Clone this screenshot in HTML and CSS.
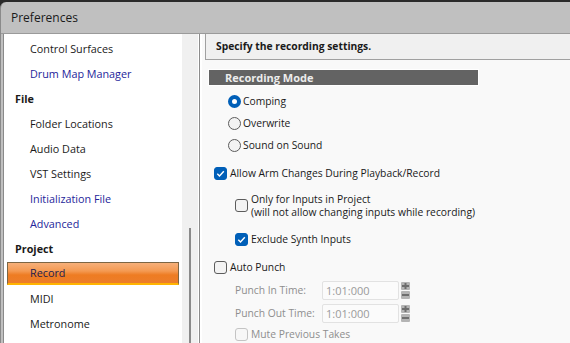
FILE: index.html
```html
<!DOCTYPE html>
<html lang="en">
<head>
    <meta charset="UTF-8">
    <title>Preferences</title>
    <link rel="stylesheet" href="styles.css">
</head>
<body>

<div class="window">
    <div class="titlebar">Preferences</div>
    <div class="content">
        <div class="sidebar">
            <div class="tree">
                <div class="item sub">Control Surfaces</div>
                <div class="item sub link">Drum Map Manager</div>
                <div class="item group">File</div>
                <div class="item sub">Folder Locations</div>
                <div class="item sub">Audio Data</div>
                <div class="item sub">VST Settings</div>
                <div class="item sub link">Initialization File</div>
                <div class="item sub link">Advanced</div>
                <div class="item group">Project</div>
                <div class="item sub selected"><span>Record</span></div>
                <div class="item sub">MIDI</div>
                <div class="item sub">Metronome</div>
            </div>
            <div class="track"><div class="thumb"></div></div>
        </div>

        <div class="main">
            <div class="hint">Specify the recording settings.</div>

            <div class="section-bar">Recording Mode</div>
            <div class="radios">
                <div class="row"><span class="radio on"></span>Comping</div>
                <div class="row"><span class="radio"></span>Overwrite</div>
                <div class="row"><span class="radio"></span>Sound on Sound</div>
            </div>

            <div class="row check-row arm"><span class="box on"></span>Allow Arm Changes During Playback/Record</div>
            <div class="row check-row nested only">
                <span class="box"></span>
                <div class="two-line">Only for Inputs in Project<br>(will not allow changing inputs while recording)</div>
            </div>
            <div class="row check-row nested exclude"><span class="box on"></span>Exclude Synth Inputs</div>

            <div class="row check-row punch"><span class="box"></span>Auto Punch</div>
            <div class="row time-row first">
                <span class="time-label">Punch In Time:</span>
                <span class="time-input">1:01:000</span>
                <svg class="spin" width="9" height="17" viewBox="0 0 9 17">
                    <rect x="0" y="0" width="9" height="8" rx="1" fill="#b4b4b4"/>
                    <rect x="1" y="3" width="7" height="2" fill="#6e6e6e"/>
                    <rect x="3.5" y="1" width="2" height="6" fill="#6e6e6e"/>
                    <rect x="0" y="9" width="9" height="8" rx="1" fill="#b4b4b4"/>
                    <rect x="1" y="12" width="7" height="2" fill="#6e6e6e"/>
                </svg>
            </div>
            <div class="row time-row">
                <span class="time-label">Punch Out Time:</span>
                <span class="time-input">1:01:000</span>
                <svg class="spin" width="9" height="17" viewBox="0 0 9 17">
                    <rect x="0" y="0" width="9" height="8" rx="1" fill="#b4b4b4"/>
                    <rect x="1" y="3" width="7" height="2" fill="#6e6e6e"/>
                    <rect x="3.5" y="1" width="2" height="6" fill="#6e6e6e"/>
                    <rect x="0" y="9" width="9" height="8" rx="1" fill="#b4b4b4"/>
                    <rect x="1" y="12" width="7" height="2" fill="#6e6e6e"/>
                </svg>
            </div>
            <div class="row check-row nested mute disabled"><span class="box"></span>Mute Previous Takes</div>
        </div>
    </div>
</div>

</body>
</html>
```

FILE: styles.css
```css
body {
    margin: 0;
    background: #2a2a2a;
    font-family: "Open Sans", "Noto Sans", sans-serif;
    font-size: 11px;
    color: #1a1a1a;
    overflow: hidden;
}
.window {
    margin-top: 2px;
    height: 341px;
    background: #c0c0c0;
    border-radius: 6px 0 0 0;
    border-left: 1px solid #8a8a8a;
    display: flex;
    flex-direction: column;
}
.titlebar {
    height: 31px;
    line-height: 31px;
    padding-left: 10px;
    font-size: 12px;
    color: #1a1a1a;
    border-bottom: 1px solid #9a9a9a;
}
.content {
    flex: 1;
    display: flex;
    padding-left: 2px;
    min-height: 0;
}
.sidebar {
    width: 195px;
    display: flex;
    background: #ffffff;
    border-left: 1px solid #8a8a8a;
    border-right: 1px solid #8c8c8c;
}
.tree {
    width: 178px;
    padding-top: 2px;
    font-size: 10.8px;
}
.item {
    height: 25px;
    line-height: 25px;
    white-space: nowrap;
}
.item.sub {
    padding-left: 26px;
}
.item.group {
    padding-left: 11px;
    font-weight: bold;
}
.item.link {
    color: #24249a;
}
.item.selected {
    padding: 1px 0 0 3px;
    height: 24px;
}
.item.selected span {
    display: block;
    width: 148px;
    height: 20px;
    line-height: 20px;
    padding-left: 22px;
    color: #1c1c50;
    border: 1px solid #7c6644;
    border-bottom: 2px solid #ffb400;
    background: linear-gradient(#f7b07a 0%, #f49a52 40%, #ee7c22 60%, #ec7d2a 100%);
}
.track {
    width: 16px;
    background: #f0f0f0;
    padding-top: 194px;
}
.thumb {
    width: 2px;
    height: 120px;
    margin-left: 7px;
    background: #8a8a8a;
}
.main {
    flex: 1;
    background: #f9f9f9;
    border-left: 2px solid #ffffff;
    font-size: 10.3px;
}
.hint {
    margin-left: 3px;
    height: 25px;
    line-height: 25px;
    padding-left: 10px;
    background: #f0f0f0;
    border-left: 1px solid #a0a0a0;
    border-bottom: 1px solid #a0a0a0;
    font-weight: bold;
}
.section-bar {
    margin: 10px 0 0 7px;
    width: 253px;
    height: 15px;
    line-height: 15px;
    padding-left: 16px;
    background: #636363;
    color: #ececec;
    font-weight: bold;
    font-size: 11px;
    outline: 1px solid #ffffff;
}
.radios {
    margin-top: 5px;
    padding-left: 26px;
}
.row {
    display: flex;
    align-items: center;
    height: 22px;
    white-space: nowrap;
}
.radio {
    width: 11px;
    height: 11px;
    border: 1px solid #5c5c5c;
    border-radius: 50%;
    background: #f3f3f3;
    margin-right: 2px;
    box-sizing: content-box;
}
.radio.on {
    width: 5px;
    height: 5px;
    border: 4px solid #005fb8;
    background: #ffffff;
}
.box {
    width: 11px;
    height: 11px;
    border: 1px solid #5c5c5c;
    border-radius: 3px;
    background: #f3f3f3;
    margin-right: 3px;
    flex-shrink: 0;
}
.box.on {
    border-color: #005fb8;
    background: #005fb8 url("data:image/svg+xml,%3Csvg xmlns='http://www.w3.org/2000/svg' width='11' height='11'%3E%3Cpath d='M2.3 5.8 L4.5 8 L8.8 3.3' fill='none' stroke='white' stroke-width='1.4'/%3E%3C/svg%3E") no-repeat center;
}
.check-row {
    padding-left: 12px;
}
.check-row.nested {
    padding-left: 33px;
}
.arm {
    margin-top: 6px;
}
.only {
    height: 35px;
    margin-top: 4px;
}
.two-line {
    line-height: 13px;
}
.exclude {
    margin-top: 5px;
}
.punch {
    margin-top: 6px;
}
.time-row {
    padding-left: 33px;
    height: 20px;
    color: #8e8e8e;
}
.time-row.first {
    margin-top: 2px;
}
.time-row + .time-row {
    margin-top: 3px;
}
.time-label {
    width: 87px;
}
.time-input {
    width: 72px;
    height: 17px;
    line-height: 17px;
    padding-left: 3px;
    border: 1px solid #e2e2e2;
    border-radius: 2px;
    background: #fbfbfb;
    color: #9a9a9a;
    font-size: 11px;
}
.spin {
    margin-left: 2px;
}
.mute {
    height: 20px;
    margin-top: 1px;
}
.disabled {
    color: #8e8e8e;
}
.disabled .box {
    border-color: #c4c4c4;
    background: #f7f7f7;
}
```
